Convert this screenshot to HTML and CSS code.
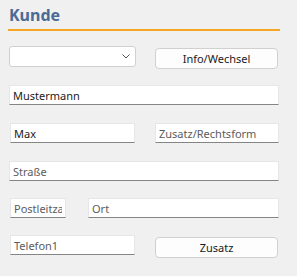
FILE: index.html
```html
<!DOCTYPE html>
<html lang="de">
<head>
  <meta charset="UTF-8" />
  <meta name="viewport" content="width=device-width, initial-scale=1.0" />
  <title>Kunde</title>
  <link rel="stylesheet" href="styles.css">
</head>
<body>
  <div class="panel">
    <h1 class="title">Kunde</h1>

    <div class="row first">
      <div class="select-wrap">
        <select class="select">
          <option></option>
        </select>
        <svg class="chevron" width="8" height="5" viewBox="0 0 8 5">
          <path d="M0.5 0.5 L4 4 L7.5 0.5" fill="none" stroke="#555" stroke-width="1" />
        </svg>
      </div>
      <button class="btn">Info/Wechsel</button>
    </div>

    <div class="row name">
      <input class="field full" type="text" value="Mustermann" />
    </div>

    <div class="row">
      <input class="field half indent" type="text" value="Max" />
      <input class="field half" type="text" placeholder="Zusatz/Rechtsform" />
    </div>

    <div class="row">
      <input class="field full" type="text" placeholder="Straße" />
    </div>

    <div class="row tight">
      <input class="field zip indent" type="text" placeholder="Postleitzahl" />
      <input class="field city" type="text" placeholder="Ort" />
    </div>

    <div class="row tight">
      <input class="field half indent" type="text" placeholder="Telefon1" />
      <button class="btn">Zusatz</button>
    </div>
  </div>
</body>
</html>
```

FILE: styles.css
```css
body {
  margin: 0;
  background: #f0f0f0;
  font-family: "Noto Sans", "DejaVu Sans", sans-serif;
  font-size: 11px;
  color: #1a1a1a;
}

.panel {
  width: 272px;
  padding: 3px 0 0 8px;
}

.title {
  margin: 0;
  padding: 0 0 2px 1px;
  font-family: "Noto Sans", sans-serif;
  font-size: 16px;
  font-weight: bold;
  color: #4b6a96;
  line-height: 24px;
  border-bottom: 2px solid #f5a623;
}

.row {
  display: flex;
  align-items: flex-start;
  justify-content: space-between;
  margin: 18px 0 0 1px;
  width: 270px;
}

.row.first {
  margin-top: 15px;
}

.row.name {
  margin-top: 16px;
}

.row.tight {
  margin-top: 17px;
}

.select-wrap {
  position: relative;
  width: 127px;
  height: 21px;
}

.select {
  appearance: none;
  -webkit-appearance: none;
  box-sizing: border-box;
  width: 100%;
  height: 100%;
  margin: 0;
  border: 1px solid #d0d0d0;
  border-radius: 3px;
  background: #fff;
}

.chevron {
  position: absolute;
  right: 6px;
  top: 8px;
  pointer-events: none;
}

.btn {
  box-sizing: border-box;
  width: 123px;
  height: 21px;
  margin: 2px 1px 0 0;
  padding: 0;
  border: 1px solid #d0d0d0;
  border-radius: 4px;
  background: #fdfdfd;
  font-family: inherit;
  font-size: 11px;
  color: #1a1a1a;
}

.field {
  box-sizing: border-box;
  height: 20px;
  margin: 0;
  padding: 0 3px;
  border: 1px solid #e6e6e6;
  border-bottom-color: #858585;
  border-radius: 0;
  background: #fff;
  font-family: inherit;
  font-size: 11px;
  color: #1a1a1a;
  outline: none;
}

.field::placeholder {
  color: #5c5c5c;
}

.indent {
  margin-left: 1px;
}

.full {
  width: 270px;
}

.half {
  width: 125px;
}

.half + .half {
  width: 124px;
}

.zip {
  width: 56px;
}

.city {
  width: 191px;
}
```
